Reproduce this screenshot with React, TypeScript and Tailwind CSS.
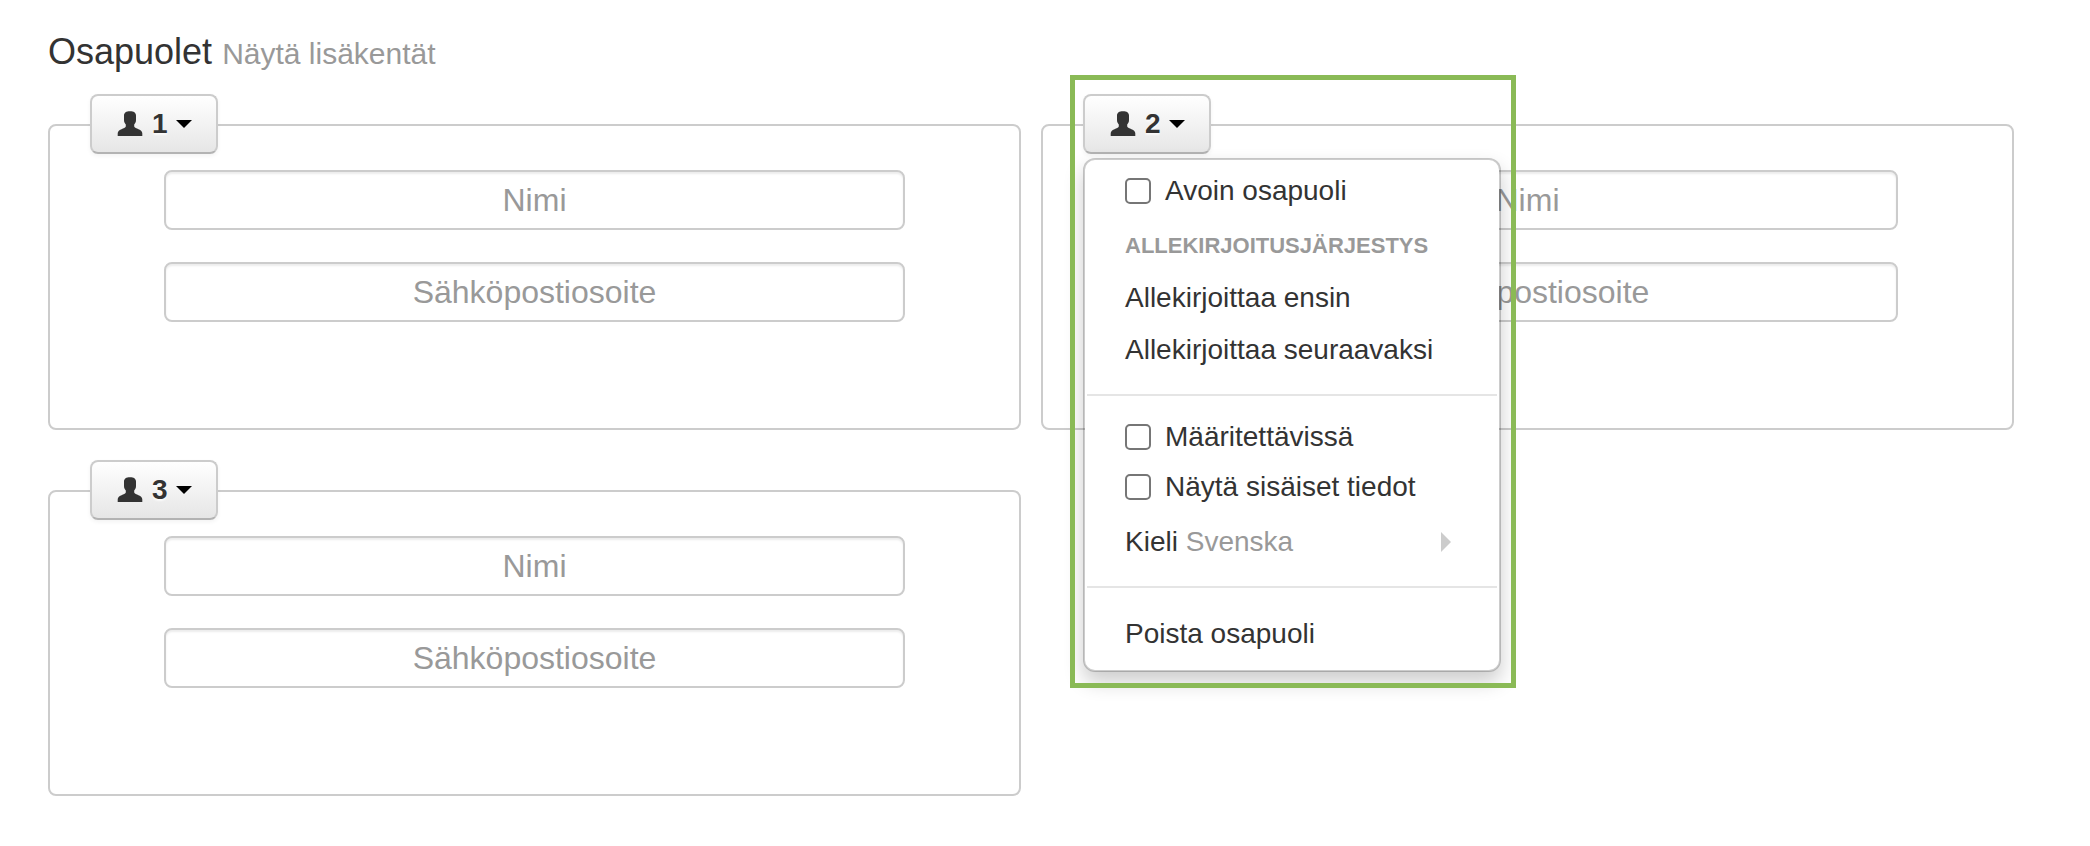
import type { ReactNode } from "react";

const parties = [
  { number: 1, open: false },
  { number: 2, open: true },
  { number: 3, open: false },
];

export default function App() {
  return (
    <main className="min-h-screen bg-white pt-8 pr-[76px] pb-12 pl-12 font-['Liberation_Sans',Arial,sans-serif] text-[#333]">
      <h1 className="text-[36px] leading-[40px]">
        Osapuolet{" "}
        <a href="#fields" className="text-[30px] text-[#999]">
          Näytä lisäkentät
        </a>
      </h1>

      <div className="mt-[50px] grid grid-cols-2 gap-x-5 gap-y-[60px]">
        {parties.map((party) => (
          <PartyCard key={party.number} {...party} />
        ))}
      </div>
    </main>
  );
}

function PartyCard({ number, open }: { number: number; open: boolean }) {
  return (
    <section
      aria-label={`Osapuoli ${number}`}
      className="relative flex flex-col gap-8 rounded-lg border-2 border-[#ccc] px-[114px] pt-11 pb-[106px]"
    >
      <PartyInput type="text" label="Nimi" />
      <PartyInput type="email" label="Sähköpostiosoite" />

      {/* Toggle sits on the top border of the card */}
      <div className="absolute -top-8 left-10">
        <button
          type="button"
          aria-expanded={open}
          className="flex h-[60px] items-center gap-2 rounded-lg border-2 border-[#ccc] border-b-[#b3b3b3] bg-linear-to-b from-white to-[#e6e6e6] px-6 text-[28px] leading-10 font-bold shadow-[0_2px_4px_rgba(0,0,0,0.05)] [text-shadow:0_2px_2px_rgba(255,255,255,0.75)]"
        >
          <UserIcon />
          {number}
          <span className="border-x-8 border-t-8 border-x-transparent border-t-black" />
        </button>
        {open && <PartyMenu />}
      </div>
    </section>
  );
}

function PartyInput({ type, label }: { type: string; label: string }) {
  return (
    <input
      type={type}
      aria-label={label}
      placeholder={label}
      className="h-[60px] w-full rounded-lg border-2 border-[#ccc] bg-white px-3 text-center text-[32px] leading-10 shadow-[inset_0_2px_2px_rgba(0,0,0,0.075)] placeholder:text-[#999]"
    />
  );
}

function PartyMenu() {
  return (
    <div className="absolute top-full left-0 z-10 mt-1 w-[418px] rounded-xl border-2 border-black/20 bg-white bg-clip-padding py-2.5 text-[28px] leading-10 shadow-[0_10px_20px_rgba(0,0,0,0.2)]">
      <MenuCheckbox label="Avoin osapuoli" className="h-[42px]" />
      <h2 className="mt-4 mb-2 px-10 text-[22px] leading-9 font-bold text-[#999] uppercase">
        Allekirjoitusjärjestys
      </h2>
      <MenuItem>Allekirjoittaa ensin</MenuItem>
      <MenuItem>Allekirjoittaa seuraavaksi</MenuItem>

      <hr className="mx-0.5 mt-[18px] mb-4 border-t-2 border-[#e5e5e5]" />

      <MenuCheckbox label="Määritettävissä" className="h-[50px]" />
      <MenuCheckbox label="Näytä sisäiset tiedot" className="h-[50px]" />
      <div className="mt-1">
        <MenuItem>
          <span>
            Kieli <span className="text-[#999]">Svenska</span>
          </span>
          <span className="mr-2 ml-auto border-y-10 border-l-10 border-y-transparent border-l-[#ccc]" />
        </MenuItem>
      </div>

      <hr className="mx-0.5 mt-[18px] mb-5 border-t-2 border-[#e5e5e5]" />

      <MenuItem>Poista osapuoli</MenuItem>

      {/* Highlight around the toggle and its menu */}
      <div className="pointer-events-none absolute -top-[85px] -right-[17px] -bottom-[18px] -left-[15px] border-5 border-[#8aba56]" />
    </div>
  );
}

function MenuItem({ children }: { children: ReactNode }) {
  return (
    <button type="button" className="flex h-[52px] w-full items-center px-10 text-left whitespace-nowrap">
      {children}
    </button>
  );
}

function MenuCheckbox({ label, className }: { label: string; className: string }) {
  return (
    <label className={`flex items-center gap-3.5 px-10 whitespace-nowrap ${className}`}>
      <input
        type="checkbox"
        className="size-[26px] shrink-0 appearance-none rounded-[5px] border-2 border-[#767676] bg-white checked:bg-[#767676]"
      />
      {label}
    </label>
  );
}

function UserIcon() {
  return (
    <svg viewBox="0 0 28 28" className="size-7" fill="#333" aria-hidden="true">
      <path d="M14 1.300C10.200 1.300 8 2.800 8 5.500V10C8 12 8.700 13.300 9.800 14.500V16.500C9.500 17.600 7.500 18.400 5.500 19.200C3 20.200 1.700 21.400 1.700 23.500V26H26.300V23.500C26.300 21.400 25 20.200 22.500 19.200C20.500 18.400 18.500 17.600 18.200 16.500V14.500C19.300 13.300 20 12 20 10V5.500C20 2.800 17.800 1.300 14 1.300Z" />
    </svg>
  );
}
